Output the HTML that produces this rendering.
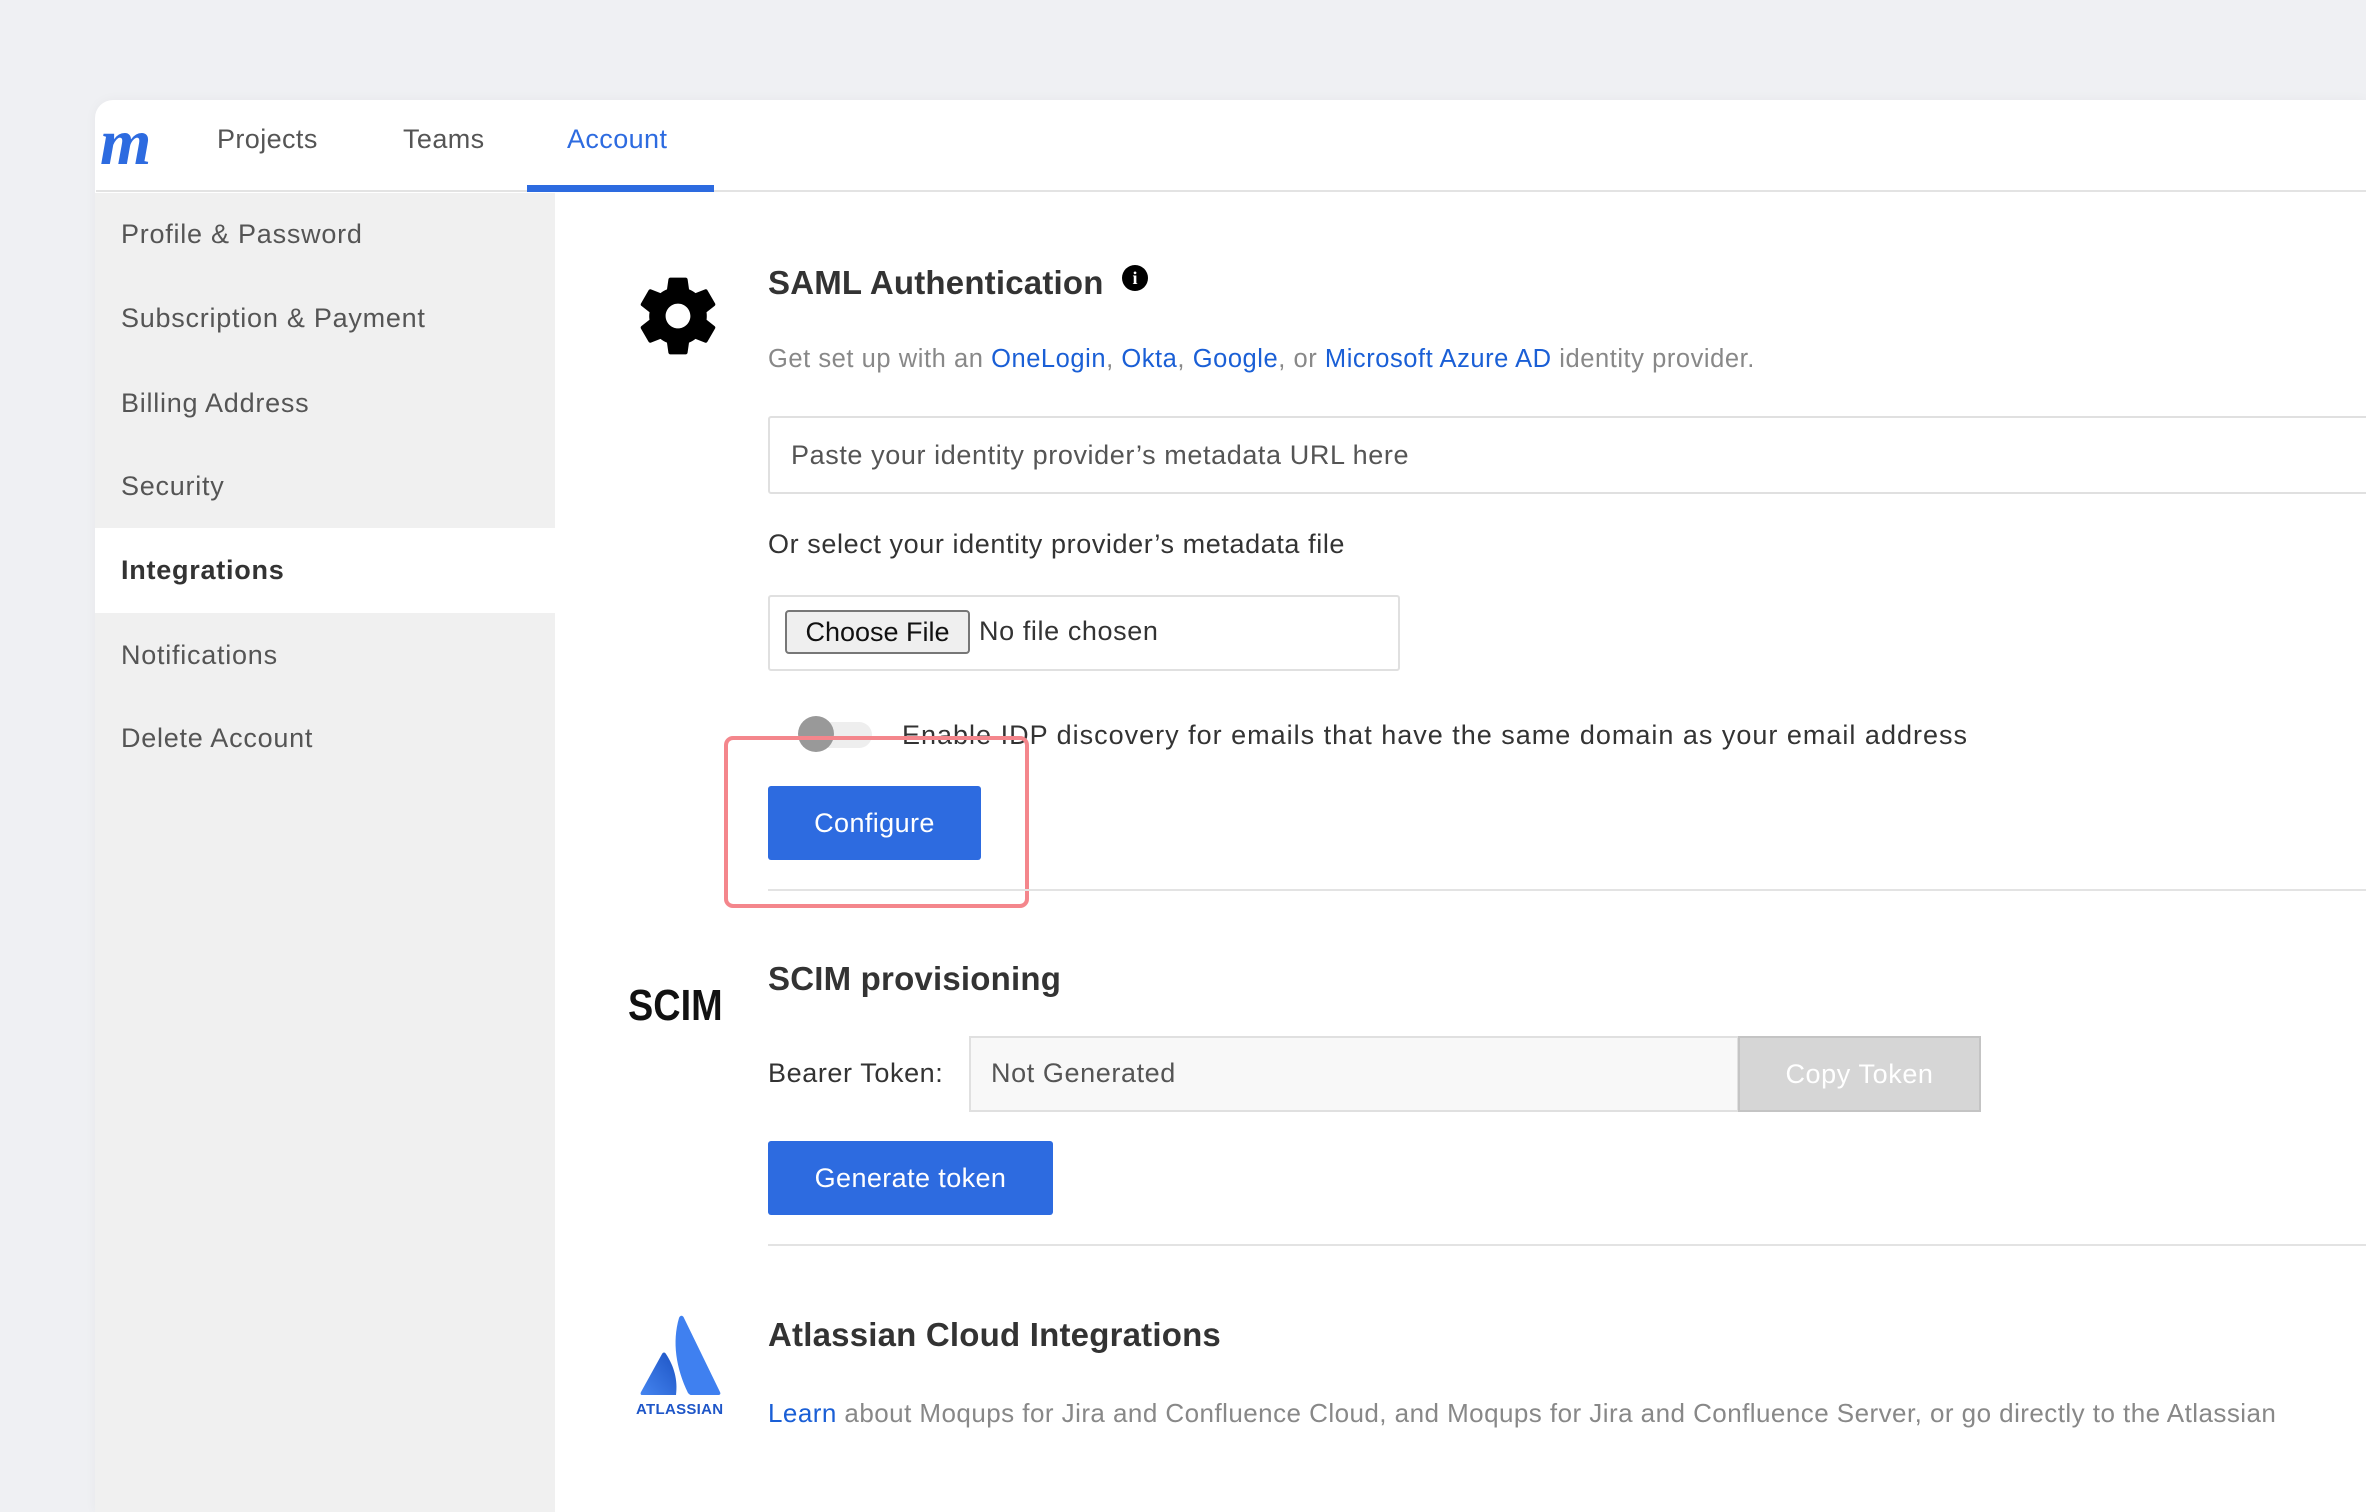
<!DOCTYPE html>
<html style="width:2366px;height:1512px;overflow:hidden"><head><meta charset="utf-8">
<style>
*{margin:0;padding:0;box-sizing:border-box}
body{width:2366px;height:1512px;background:#eff0f3;font-family:"Liberation Sans",Arial,sans-serif;position:relative;overflow:hidden;color:#333}
.a{position:absolute;white-space:nowrap}
.card{position:absolute;left:95px;top:100px;width:2271px;height:1412px;background:#fff;border-radius:18px 0 0 0;box-shadow:0 0 12px rgba(0,0,0,0.04);overflow:hidden}
.nav{font-size:27px;color:#555;top:124px;letter-spacing:0.4px}
.side{position:absolute;left:95px;top:193px;width:460px;height:1319px;background:#f0f0f0}
.si{position:absolute;left:26px;font-size:27px;color:#555;letter-spacing:0.75px}
.h{font-size:33px;font-weight:bold;color:#333;letter-spacing:0.2px}
.t{letter-spacing:0.6px}
.blue{color:#1a5fd6}
.btn{position:absolute;background:#2d6be0;color:#fff;font-size:27px;border-radius:3px;display:flex;align-items:center;justify-content:center;letter-spacing:0.4px}
.div{position:absolute;left:768px;right:0;height:2px;background:#e3e3e3}
</style></head><body>
<div class="card"></div>
<div class="a" style="left:96px;top:100px;width:2270px;height:92px;border-bottom:2px solid #e3e3e3"></div>
<div class="a" style="left:100px;top:110px;font-family:'Liberation Serif',serif;font-style:italic;font-weight:bold;font-size:66px;color:#2d6be0;line-height:66px;letter-spacing:-3px">m</div>
<div class="a nav" style="left:217px">Projects</div>
<div class="a nav" style="left:403px">Teams</div>
<div class="a nav" style="left:567px;color:#2d6be0">Account</div>
<div class="a" style="left:527px;top:185px;width:187px;height:7px;background:#2d6be0"></div>

<div class="side">
<div class="si" style="top:26px">Profile &amp; Password</div>
<div class="si" style="top:110px">Subscription &amp; Payment</div>
<div class="si" style="top:195px">Billing Address</div>
<div class="si" style="top:278px">Security</div>
<div style="position:absolute;left:0;top:335px;width:460px;height:85px;background:#fff"></div>
<div class="si" style="top:362px;color:#333;font-weight:bold">Integrations</div>
<div class="si" style="top:447px">Notifications</div>
<div class="si" style="top:530px">Delete Account</div>
</div>

<svg class="a" style="left:630px;top:268px" width="96" height="96" viewBox="0 0 24 24"><path fill="#000" d="M19.14,12.94c0.04-0.3,0.06-0.61,0.06-0.94c0-0.32-0.02-0.64-0.07-0.94l2.03-1.58c0.18-0.14,0.23-0.41,0.12-0.61l-1.920-3.32c-0.12-0.22-0.37-0.29-0.59-0.22l-2.39,0.96c-0.5-0.38-1.03-0.7-1.62-0.94L14.4,2.81c-0.04-0.24-0.24-0.41-0.48-0.41h-3.84c-0.24,0-0.43,0.17-0.47,0.41L9.25,5.35C8.66,5.59,8.12,5.920,7.63,6.29L5.24,5.33c-0.22-0.08-0.47,0-0.59,0.22L2.74,8.87C2.62,9.08,2.66,9.34,2.86,9.48l2.03,1.58C4.84,11.36,4.8,11.69,4.8,12s0.02,0.64,0.07,0.94l-2.03,1.58c-0.18,0.14-0.23,0.41-0.12,0.61l1.92,3.32c0.12,0.22,0.37,0.29,0.59,0.22l2.39-0.96c0.5,0.38,1.03,0.7,1.62,0.94l0.36,2.54c0.05,0.24,0.24,0.41,0.48,0.41h3.84c0.24,0,0.44-0.17,0.47-0.41l0.36-2.54c0.59-0.24,1.13-0.56,1.62-0.94l2.39,0.96c0.22,0.08,0.47,0,0.59-0.22l1.92-3.32c0.12-0.22,0.07-0.47-0.12-0.61L19.14,12.94z M12,15.1c-1.7,0-3.1-1.4-3.1-3.1s1.4-3.1,3.1-3.1s3.1,1.4,3.1,3.1S13.7,15.1,12,15.1z"/></svg>

<div class="a h" style="left:768px;top:264px">SAML Authentication</div>
<div class="a" style="left:1122px;top:265px;width:26px;height:26px;border-radius:50%;background:#000;color:#fff;font-size:18px;font-weight:bold;text-align:center;line-height:26px;font-family:'Liberation Serif',serif">i</div>
<div class="a" style="left:768px;top:345px;font-size:25.5px;color:#888;letter-spacing:0.55px">Get set up with an <span class="blue">OneLogin</span>, <span class="blue">Okta</span>, <span class="blue">Google</span>, or <span class="blue">Microsoft Azure AD</span> identity provider.</div>
<div class="a" style="left:768px;top:416px;width:1620px;height:78px;border:2px solid #e0e0e0;border-radius:3px"></div>
<div class="a t" style="left:791px;top:440px;font-size:27px;color:#555">Paste your identity provider’s metadata URL here</div>
<div class="a t" style="left:768px;top:529px;font-size:27px;color:#333">Or select your identity provider’s metadata file</div>
<div class="a" style="left:768px;top:595px;width:632px;height:76px;border:2px solid #e0e0e0;border-radius:3px"></div>
<div class="a" style="left:785px;top:610px;width:185px;height:44px;border:2px solid #777;border-radius:4px;background:#efefef;font-size:27px;color:#111;text-align:center;line-height:40px">Choose File</div>
<div class="a t" style="left:979px;top:616px;font-size:27px;color:#333">No file chosen</div>
<div class="a" style="left:800px;top:722px;width:72px;height:26px;border-radius:13px;background:#eee"></div>
<div class="a" style="left:798px;top:716px;width:36px;height:36px;border-radius:50%;background:#999"></div>
<div class="a" style="left:902px;top:720px;font-size:27px;color:#333;letter-spacing:1.0px">Enable IDP discovery for emails that have the same domain as your email address</div>
<div class="btn" style="left:768px;top:786px;width:213px;height:74px">Configure</div>
<div class="a" style="left:724px;top:736px;width:305px;height:172px;border:4px solid #f4868c;border-radius:9px"></div>
<div class="div" style="top:889px"></div>

<div class="a" style="left:628px;top:984px;font-size:44px;line-height:44px;font-weight:bold;color:#111;transform:scaleX(0.86);transform-origin:0 0">SCIM</div>
<div class="a h" style="left:768px;top:960px">SCIM provisioning</div>
<div class="a t" style="left:768px;top:1058px;font-size:27px;color:#333">Bearer Token:</div>
<div class="a" style="left:969px;top:1036px;width:770px;height:76px;border:2px solid #e0e0e0;background:#f8f8f8"></div>
<div class="a t" style="left:991px;top:1058px;font-size:27px;color:#555">Not Generated</div>
<div class="a t" style="left:1738px;top:1036px;width:243px;height:76px;border:2px solid #c4c4c4;background:#d6d6d6;color:#fff;font-size:27px;text-align:center;line-height:72px">Copy Token</div>
<div class="btn" style="left:768px;top:1141px;width:285px;height:74px">Generate token</div>
<div class="div" style="top:1244px"></div>

<svg class="a" style="left:634px;top:1310px" width="96" height="90" viewBox="0 0 96 90"><defs><linearGradient id="g" x1="1" y1="0" x2="0" y2="1"><stop offset="0" stop-color="#1d54c4"/><stop offset="1" stop-color="#4585f0"/></linearGradient></defs><path fill="url(#g)" d="M28 44 C29 42 31 42 32 44 C40 56 44 70 42 85 H8 C7 85 6 84 7 82Z"/><path fill="#3f80f0" d="M45 8 C46 5 49 5 50 8 L86 82 C87 84 86 85 84 85 H57 C56 85 55 84 54 83 C42 58 38 32 45 8Z"/></svg>
<div class="a" style="left:636px;top:1401px;font-size:15px;font-weight:bold;color:#1e56c8;letter-spacing:0.3px">ATLASSIAN</div>
<div class="a h" style="left:768px;top:1316px">Atlassian Cloud Integrations</div>
<div class="a" style="left:768px;top:1398px;font-size:26px;color:#888;letter-spacing:0.45px"><span class="blue">Learn</span> about Moqups for Jira and Confluence Cloud, and Moqups for Jira and Confluence Server, or go directly to the Atlassian</div>
</body></html>
